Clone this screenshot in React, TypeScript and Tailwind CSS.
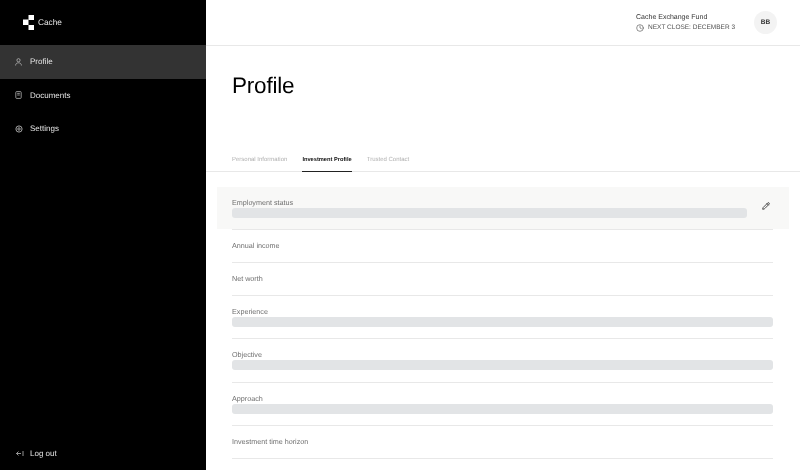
import React from 'react';
import { Clock, Pencil } from 'lucide-react';

const Logo = () => (
    <svg width="11" height="15" viewBox="0 0 11 15" fill="white">
        <rect x="0" y="4.5" width="5.5" height="5.5" />
        <rect x="5.5" y="0" width="5.5" height="5" />
        <rect x="5.5" y="10" width="5.5" height="5" />
    </svg>
);

const ProfileIcon = () => (
    <svg width="7" height="8" viewBox="0 0 7 8" fill="none" stroke="#b5b5b5" strokeWidth="0.8">
        <circle cx="3.5" cy="2.2" r="1.6" />
        <path d="M0.6 7.5C0.6 5.6 2 4.8 3.5 4.8C5 4.8 6.4 5.6 6.4 7.5" />
    </svg>
);

const DocumentIcon = () => (
    <svg width="7" height="8" viewBox="0 0 7 8" fill="none" stroke="#b5b5b5" strokeWidth="0.8">
        <rect x="0.8" y="0.6" width="5.4" height="6.8" rx="0.8" />
        <path d="M2.2 2.4H4.8M2.2 4H4.8" />
    </svg>
);

const SettingsIcon = () => (
    <svg width="8" height="8" viewBox="0 0 8 8" fill="none" stroke="#b5b5b5">
        <circle cx="4" cy="4" r="3.1" strokeWidth="0.9" />
        <circle cx="4" cy="4" r="1.2" strokeWidth="0.9" />
    </svg>
);

const Row: React.FC<{ label: string; bar?: boolean }> = ({ label, bar }) => (
    <div className={`border-b border-[#e8e8e8] pt-[11px] ${bar ? 'h-[43.3px]' : 'h-[33px]'}`}>
        <div className="text-[7.2px] leading-[10px] text-[#6f6f6f]">{label}</div>
        {bar && <div className="h-[10px] rounded-[3px] bg-[#e2e4e6]" />}
    </div>
);

export default function App() {
    const menu = [
        { label: 'Profile', active: true, icon: <ProfileIcon /> },
        { label: 'Documents', active: false, icon: <DocumentIcon /> },
        { label: 'Settings', active: false, icon: <SettingsIcon /> },
    ];

    return (
        <div className="font-['Liberation_Sans',sans-serif] [text-rendering:geometricPrecision] will-change-transform w-[800px] h-[470px] flex overflow-hidden">
            <aside className="w-[206px] shrink-0 bg-black flex flex-col">
                <div className="h-[45px] flex items-center pl-[23px] gap-[4px]">
                    <Logo />
                    <span className="text-[8.3px] text-[#e5e5e5]">Cache</span>
                </div>
                <nav className="flex flex-col">
                    {menu.map(m => (
                        <div key={m.label} className={`h-[33.5px] flex items-center pl-[15px] text-[8px] text-[#e5e5e5] ${m.active ? 'bg-[#333333]' : ''}`}>
                            <span className="w-[15px] flex">{m.icon}</span>
                            <span className="pt-[1px]">{m.label}</span>
                        </div>
                    ))}
                </nav>
                <div className="mt-auto h-[34px] flex items-center pl-[16px] text-[8px] text-[#e5e5e5]">
                    <span className="w-[14px] flex">
                        <svg width="8" height="7" viewBox="0 0 8 7" fill="none" stroke="#bbbbbb" strokeWidth="0.8">
                            <path d="M0.5 3.5H5M2.5 1.5L0.5 3.5L2.5 5.5M7 1V6" />
                        </svg>
                    </span>
                    <span className="pt-[1px]">Log out</span>
                </div>
            </aside>
            <main className="flex-1 min-w-0 flex flex-col">
                <header className="h-[46px] shrink-0 border-b border-[#e8e8e8] flex items-center justify-end pr-[23px]">
                    <div className="mr-[19px] text-[#333333]">
                        <div className="text-[7px] leading-[10px]">Cache Exchange Fund</div>
                        <div className="text-[6.5px] leading-[10px] flex items-center gap-[4px] text-[#555555]">
                            <Clock size={8} strokeWidth={1.6} className="text-[#333333]" />
                            NEXT CLOSE: DECEMBER 3
                        </div>
                    </div>
                    <div className="w-[23px] h-[23px] rounded-full bg-[#f3f3f3] flex items-center justify-center text-[6.5px] font-bold text-[#333333]">BB</div>
                </header>
                <h1 className="pl-[26px] pt-[25px] h-[106px] text-[22.5px] leading-[30px] tracking-[-0.2px] text-black">Profile</h1>
                <div className="h-[20px] border-b border-[#e8e8e8] pl-[26px] flex gap-[15px] text-[6px]">
                    <span className="text-[#b0b0b0] pt-[4px]">Personal Information</span>
                    <span className="text-[#111111] font-bold text-[5.7px] border-b border-[#222222] h-[20px] pt-[4px]">Investment Profile</span>
                    <span className="text-[#b0b0b0] pt-[4px]">Trusted Contact</span>
                </div>
                <div className="pt-[15px] px-[11px]">
                    <div className="bg-[#f8f8f7] h-[42px] pl-[15px] pt-[11px] flex items-start">
                        <div className="flex-1 min-w-0">
                            <div className="text-[7.2px] leading-[10px] text-[#6f6f6f]">Employment status</div>
                            <div className="h-[10px] rounded-[3px] bg-[#e2e4e6]" />
                        </div>
                        <div className="w-[42px] pl-[15px] pt-[4px]">
                            <Pencil size={8} strokeWidth={2.6} className="text-[#333333]" />
                        </div>
                    </div>
                </div>
                <div className="pl-[26px] pr-[27px]">
                    <div className="border-t border-[#e8e8e8]" />
                    <Row label="Annual income" />
                    <Row label="Net worth" />
                    <Row label="Experience" bar />
                    <Row label="Objective" bar />
                    <Row label="Approach" bar />
                    <Row label="Investment time horizon" />
                </div>
            </main>
        </div>
    );
}
